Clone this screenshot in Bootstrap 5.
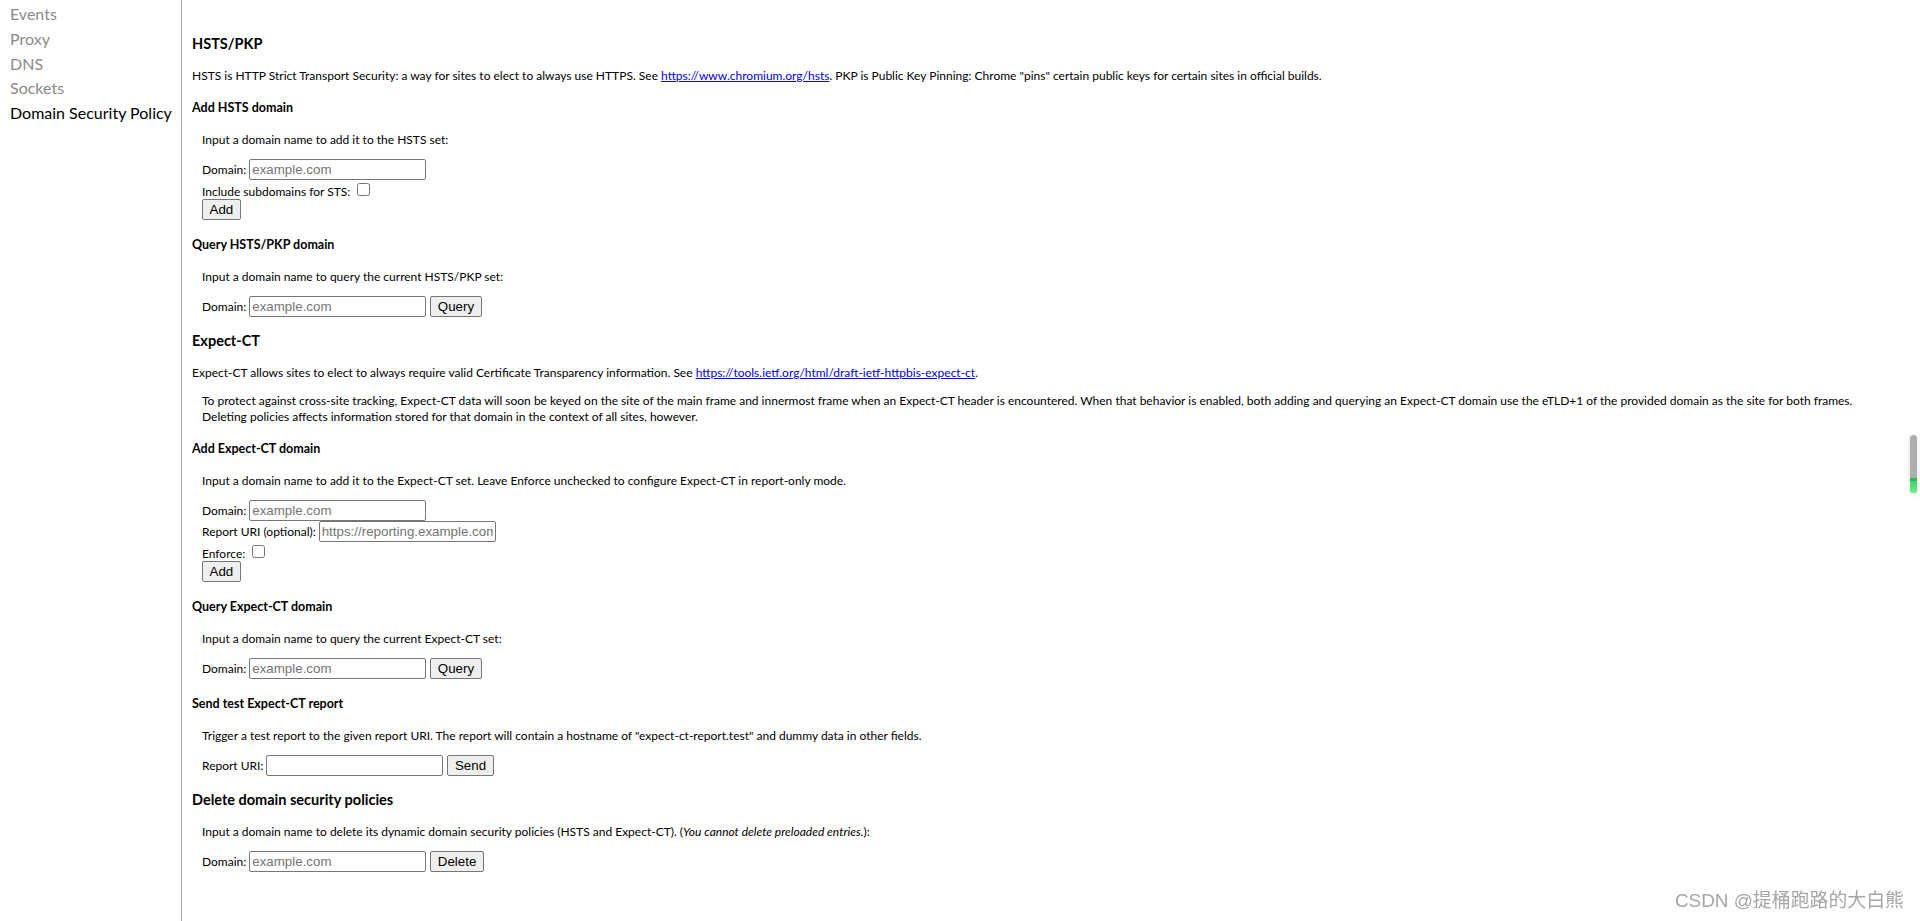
<!DOCTYPE html>
<html lang="en">
<head>
  <meta charset="UTF-8" />
  <title>net-internals</title>
  <link href="https://cdn.jsdelivr.net/npm/bootstrap@5.3.2/dist/css/bootstrap.min.css" rel="stylesheet" />
  <style>
    html, body { height: 100%; }
    body { font-family: Lato, "Liberation Sans", sans-serif; font-size: 12px; line-height: 16px; color: #000; overflow: hidden; background: #fff; }
    a { color: #0000ee; }
    #sideNav { width: 182px; border-right: 1px solid #a9a9a9; font-size: 16px; padding: 2px 0 0 10px; }
    #sideNav div { height: 24.8px; line-height: 24px; white-space: nowrap; color: #8a8a8a; }
    #sideNav div.current { color: #000; }
    #mainPane { padding: 36px 10px 0 10px; }
    #mainPane h2 { font-size: 14.5px; line-height: 16px; font-weight: 700; margin: 16px 0; }
    #mainPane h2:first-child { margin-top: 0; }
    #mainPane h3 { font-size: 12.5px; line-height: 16px; font-weight: 700; margin: 16px 0; }
    #mainPane p { margin: 0 0 12px; }
    .form-block { padding-left: 10px; margin-bottom: 17px; }
    .form-block:has(+ h2) { margin-bottom: 16px; }
    .form-block p { margin-bottom: 11px !important; }
    .note-block { padding: 0 30px 0 10px; margin-bottom: 16px; }
    .field-row { height: 21px; gap: 3px; }
    .check-row { height: 19px; gap: 7px; }
    .check-row label { padding-top: 4px; white-space: nowrap; }
    .check-row input { width: 13px; height: 13px; margin: 3px 0 0; }
    .text-input { width: 177px; height: 21px; padding: 1px 2px; border: 1px solid #767676; border-radius: 2px; font: 13.33px "Liberation Sans", sans-serif; flex-shrink: 0; }
    .text-input::placeholder { color: #757575; opacity: 1; }
    .plain-btn { height: 21px; padding: 0 6.5px; border: 1px solid #767676; border-radius: 2px; background: #efefef; font: 13.33px "Liberation Sans", sans-serif; color: #000; }
    .text-input + .plain-btn { margin-left: 1px; }
    #scrollMarker { position: fixed; left: 1910px; top: 435px; width: 7px; height: 58px; border-radius: 4px; overflow: hidden; background: #adadad; box-shadow: 0 2px 6px rgba(0, 0, 0, 0.12); }
    #scrollMarker div { height: 15px; margin-top: 43px; border-top: 3px solid #2bb85a; background: linear-gradient(#3fd56c, #74ec84); }
    #watermark { position: fixed; right: 16px; bottom: 8px; font: 18.9px "Liberation Sans", "Noto Sans CJK SC", sans-serif; line-height: 24px; color: #a6a6a6; white-space: nowrap; }
  </style>
</head>
<body>
  <div class="d-flex h-100">
    <div id="sideNav" class="flex-shrink-0">
      <div>Events</div>
      <div>Proxy</div>
      <div>DNS</div>
      <div>Sockets</div>
      <div class="current">Domain Security Policy</div>
    </div>
    <div id="mainPane" class="flex-grow-1">
      <h2>HSTS/PKP</h2>
      <p>HSTS is HTTP Strict Transport Security: a way for sites to elect to always use HTTPS. See <a href="#">https://www.chromium.org/hsts</a>. PKP is Public Key Pinning: Chrome "pins" certain public keys for certain sites in official builds.</p>

      <h3>Add HSTS domain</h3>
      <div class="form-block">
        <p>Input a domain name to add it to the HSTS set:</p>
        <div class="field-row d-flex align-items-center"><label>Domain:</label><input class="text-input" type="text" placeholder="example.com"></div>
        <div class="check-row d-flex align-items-start"><label>Include subdomains for STS:</label><input type="checkbox"></div>
        <div class="field-row d-flex align-items-center"><button class="plain-btn" type="button">Add</button></div>
      </div>

      <h3>Query HSTS/PKP domain</h3>
      <div class="form-block">
        <p>Input a domain name to query the current HSTS/PKP set:</p>
        <div class="field-row d-flex align-items-center"><label>Domain:</label><input class="text-input" type="text" placeholder="example.com"><button class="plain-btn" type="button">Query</button></div>
      </div>

      <h2>Expect-CT</h2>
      <p>Expect-CT allows sites to elect to always require valid Certificate Transparency information. See <a href="#">https://tools.ietf.org/html/draft-ietf-httpbis-expect-ct</a>.</p>
      <div class="note-block">To protect against cross-site tracking, Expect-CT data will soon be keyed on the site of the main frame and innermost frame when an Expect-CT header is encountered. When that behavior is enabled, both adding and querying an Expect-CT domain use the eTLD+1 of the provided domain as the site for both frames. Deleting policies affects information stored for that domain in the context of all sites, however.</div>

      <h3>Add Expect-CT domain</h3>
      <div class="form-block">
        <p>Input a domain name to add it to the Expect-CT set. Leave Enforce unchecked to configure Expect-CT in report-only mode.</p>
        <div class="field-row d-flex align-items-center"><label>Domain:</label><input class="text-input" type="text" placeholder="example.com"></div>
        <div class="field-row d-flex align-items-center"><label>Report URI (optional):</label><input class="text-input" type="text" placeholder="https://reporting.example.com"></div>
        <div class="check-row d-flex align-items-start"><label>Enforce:</label><input type="checkbox"></div>
        <div class="field-row d-flex align-items-center"><button class="plain-btn" type="button">Add</button></div>
      </div>

      <h3>Query Expect-CT domain</h3>
      <div class="form-block">
        <p>Input a domain name to query the current Expect-CT set:</p>
        <div class="field-row d-flex align-items-center"><label>Domain:</label><input class="text-input" type="text" placeholder="example.com"><button class="plain-btn" type="button">Query</button></div>
      </div>

      <h3>Send test Expect-CT report</h3>
      <div class="form-block">
        <p>Trigger a test report to the given report URI. The report will contain a hostname of "expect-ct-report.test" and dummy data in other fields.</p>
        <div class="field-row d-flex align-items-center"><label>Report URI:</label><input class="text-input" type="text"><button class="plain-btn" type="button">Send</button></div>
      </div>

      <h2>Delete domain security policies</h2>
      <div class="form-block">
        <p class="mt-3">Input a domain name to delete its dynamic domain security policies (HSTS and Expect-CT). (<i>You cannot delete preloaded entries.</i>):</p>
        <div class="field-row d-flex align-items-center"><label>Domain:</label><input class="text-input" type="text" placeholder="example.com"><button class="plain-btn" type="button">Delete</button></div>
      </div>
    </div>
  </div>
  <div id="scrollMarker"><div></div></div>
  <div id="watermark">CSDN @提桶跑路的大白熊</div>
</body>
</html>
